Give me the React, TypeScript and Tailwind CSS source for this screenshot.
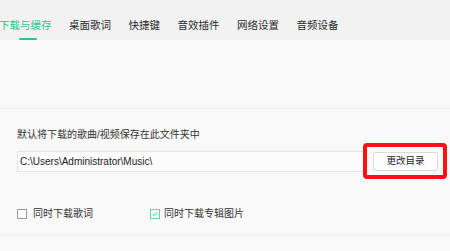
import React from "react";

const tabs = ["下载与缓存", "桌面歌词", "快捷键", "音效插件", "网络设置", "音频设备"];

export default function App() {
  return (
    <div
      className="w-[450px] h-[251px] overflow-hidden bg-[#f9f9f9] text-[#333]"
      style={{ fontFamily: '"Liberation Sans", "Noto Sans CJK SC", sans-serif' }}
    >
      {/* tab bar */}
      <div className="flex h-[40px] gap-[17.5px] bg-[#f2f2f2]">
        {tabs.map((t, i) => (
          <div key={t} className="flex flex-col h-full">
            <span
              className={`pt-[17.5px] text-[10.5px] leading-[15px] whitespace-nowrap ${
                i === 0 ? "text-[#33c28e] -ml-[1px]" : "text-[#2b2b2b]"
              }`}
            >
              {t}
            </span>
            {i === 0 && <div className="mt-auto ml-[19px] w-[18px] h-[2.5px] rounded-full bg-[#33c28e]" />}
          </div>
        ))}
      </div>

      {/* empty upper section */}
      <div className="h-[69px] border-b border-[#eeeeee]" />

      {/* download folder */}
      <div className="pt-[19px] border-b-2 border-[#f0f0f0]">
        <p className="pl-[17px] text-[10px] leading-[14px] text-[#333]">默认将下载的歌曲/视频保存在此文件夹中</p>

        <div className="flex items-center gap-[8px] pl-[17px] pr-[12px] mt-[9px]">
          <div className="flex-1 h-[21px] flex items-center pl-[2px] border border-[#e4e4e4] bg-[#fcfcfc] text-[10px] text-[#222]">
            C:\Users\Administrator\Music\
          </div>
          <div className="relative">
            <button className="w-[65px] h-[19px] flex items-center justify-center border border-[#dadada] rounded-[2px] bg-[#fdfdfd] text-[9.5px] text-[#222]">
              更改目录
            </button>
            {/* red highlight annotation */}
            <div className="absolute -left-[10px] -right-[9px] -top-[9px] -bottom-[8px] border-4 border-[#ff1010] rounded-[4px] pointer-events-none" />
          </div>
        </div>

        <div className="flex items-center pl-[17px] mt-[35px] pb-[13px] text-[10px] leading-[14px]">
          <label className="flex items-center gap-[6px] w-[133px]">
            <span className="w-[10px] h-[10px] border border-[#9a9a9a] bg-white" />
            同时下载歌词
          </label>
          <label className="flex items-center gap-[4px]">
            <span className="w-[10px] h-[10px] border border-[#6fd0ab] bg-[#f4fcf8] flex items-center justify-center">
              <svg viewBox="0 0 10 10" className="w-[8px] h-[8px]">
                <path d="M2 5.2 L4 7 L8 3" fill="none" stroke="#33c28e" strokeWidth="1.2" />
              </svg>
            </span>
            同时下载专辑图片
          </label>
        </div>
      </div>
    </div>
  );
}
